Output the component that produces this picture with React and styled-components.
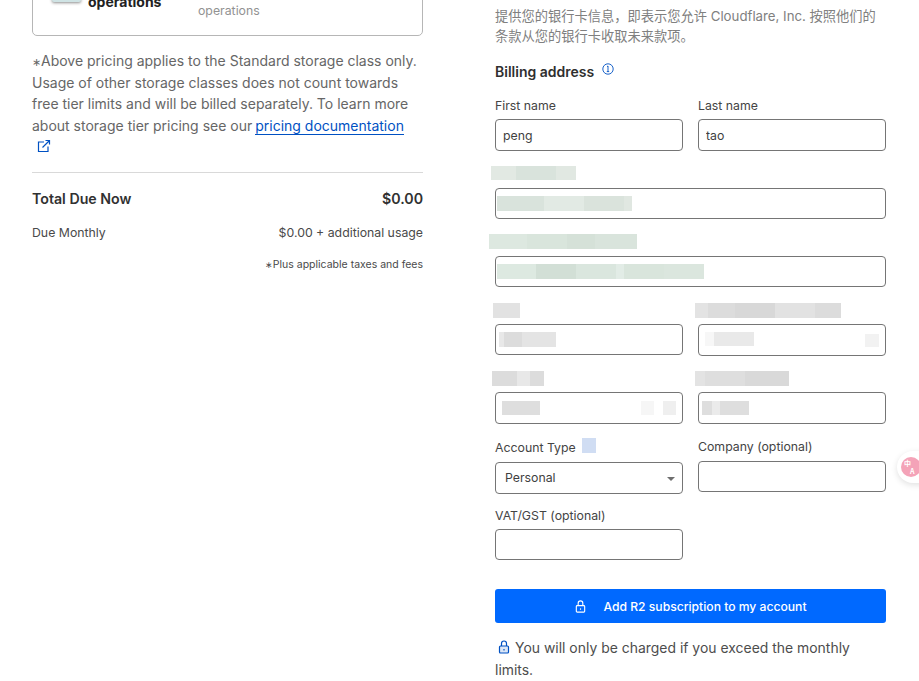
import React from 'react';
import styled, { createGlobalStyle } from 'styled-components';

const GlobalStyle = createGlobalStyle`
  html, body {
    margin: 0;
    padding: 0;
    background: #ffffff;
  }
  body {
    font-family: Inter, "Noto Sans CJK SC", "Liberation Sans", sans-serif;
    color: #313131;
  }
`;

const Page = styled.div`
  position: relative;
  width: 919px;
  height: 681px;
  overflow: hidden;
  display: flex;
  gap: 72px;
  padding-left: 32px;
  box-sizing: border-box;
`;

const Column = styled.div`
  width: 391px;
  flex: none;
`;

const PlanCard = styled.div`
  margin-top: -40px;
  height: 76px;
  box-sizing: border-box;
  border: 1px solid #b6b6b6;
  border-radius: 5px;
  display: flex;
  padding: 0 19px;
`;

const PlanThumb = styled.div`
  width: 29px;
  height: 41px;
  border-radius: 2px;
  background: #cfe3e4;
  box-shadow: 0 1px 3px rgba(0, 0, 0, 0.45);
  flex: none;
`;

const PlanName = styled.div`
  width: 110px;
  margin-left: 7px;
  padding-top: 32px;
  font-size: 14px;
  line-height: 17px;
  font-weight: 700;
  color: #222222;
`;

const PlanDetail = styled.div`
  padding-top: 42px;
  font-size: 12.3px;
  line-height: 16px;
  color: #929292;
`;

const Footnote = styled.p`
  margin: 14px 0 0;
  font-size: 14px;
  line-height: 21.5px;
  color: #666666;
`;

const Star = styled.span`
  font-size: ${(p) => p.$size}px;
  line-height: 1;
`;

const DocLink = styled.a`
  margin-left: -1px;
  color: #0051c3;
  border-bottom: 1px solid #0051c3;
  text-decoration: none;
`;

const LinkIcon = styled.svg`
  width: 14px;
  height: 14px;
  margin-left: 5px;
  vertical-align: -1px;
`;

const Divider = styled.hr`
  margin: 14px 0 0;
  border: 0;
  border-top: 1px solid #d9d9d9;
`;

const SummaryRow = styled.div`
  display: flex;
  justify-content: space-between;
  align-items: center;
  margin-top: ${(p) => p.$top}px;
  font-size: ${(p) => p.$size}px;
  line-height: 18px;
  font-weight: ${(p) => p.$weight || 400};
  color: ${(p) => p.$color || '#4a4a4a'};
`;

const TaxNote = styled.div`
  margin-top: 16px;
  text-align: right;
  font-size: 10.5px;
  line-height: 14px;
  color: #4a4a4a;
`;

const Consent = styled.p`
  margin: 7px 0 0;
  font-size: 13.25px;
  line-height: 19.5px;
  color: #808080;
`;

const Heading = styled.div`
  display: flex;
  align-items: flex-start;
  gap: 8px;
  margin-top: 16px;
  font-size: 14px;
  line-height: 20px;
  font-weight: 600;
  color: #2f2f2f;
`;

const InfoIcon = styled.svg`
  width: 12px;
  height: 12px;
  margin-top: 1px;
`;

const Row = styled.div`
  display: grid;
  grid-template-columns: 188px 188px;
  column-gap: 15px;
  align-items: start;
  margin-top: ${(p) => p.$top}px;
`;

const WideRow = styled.div`
  margin-top: ${(p) => p.$top}px;
`;

const Label = styled.label`
  display: block;
  margin-top: ${(p) => p.$top || 0}px;
  margin-bottom: ${(p) => p.$gap ?? 5}px;
  font-size: 12.3px;
  line-height: 16px;
  color: #444444;
`;

const LabelLine = styled.div`
  display: flex;
  align-items: flex-start;
  height: 16px;
  margin-bottom: 7px;
`;

const HelpMark = styled.span`
  width: 14px;
  height: 15px;
  margin: -1px 0 0 6px;
  background: #d0ddf3;
`;

const boxStyle = `
  display: flex;
  align-items: center;
  width: 100%;
  box-sizing: border-box;
  border: 1px solid #757575;
  border-radius: 4px;
  background: #ffffff;
`;

const TextInput = styled.input`
  ${boxStyle}
  height: ${(p) => p.$h || 31}px;
  padding: 0 7px;
  font: 400 12.3px Inter, sans-serif;
  color: #3f3f3f;
  outline: none;
`;

const MaskedBox = styled.div`
  ${boxStyle}
  height: ${(p) => p.$h || 31}px;
  margin-top: ${(p) => p.$top}px;
`;

const Mosaic = styled.div`
  display: flex;
  flex: none;
  height: ${(p) => p.$h || 15}px;
  margin-left: ${(p) => p.$left || 0}px;
  margin-right: ${(p) => p.$right || 0}px;
  margin-top: ${(p) => p.$lift || 0}px;
`;

const Tile = styled.span`
  width: ${(p) => p.$w}px;
  background: ${(p) => p.$c};
`;

const Spacer = styled.span`
  flex: 1;
`;

const SelectWrap = styled.div`
  position: relative;
`;

const Select = styled.select`
  ${boxStyle}
  height: 32px;
  padding: 0 9px 2px;
  appearance: none;
  font: 400 12.3px Inter, sans-serif;
  color: #3f3f3f;
`;

const Caret = styled.span`
  position: absolute;
  right: 8px;
  top: 15px;
  border-left: 4px solid transparent;
  border-right: 4px solid transparent;
  border-top: 4px solid #6e6e6e;
`;

const SubmitButton = styled.button`
  display: flex;
  align-items: center;
  justify-content: center;
  gap: 16px;
  width: 100%;
  height: 34px;
  margin-top: 29px;
  border: 0;
  border-radius: 3px;
  background: #0069ff;
  color: #ffffff;
  font: 500 12.15px Inter, sans-serif;
`;

const LockIcon = styled.svg`
  width: ${(p) => p.$size}px;
  height: ${(p) => p.$size}px;
  flex: none;
`;

const ChargeNote = styled.p`
  margin: 14px 0 0;
  font-size: 13.95px;
  line-height: 22px;
  color: #4d4d4d;

  svg {
    margin: 0 4px 0 2px;
    vertical-align: -1px;
  }
`;

const TranslateBadge = styled.div`
  position: absolute;
  left: 897px;
  top: 451px;
  width: 40px;
  height: 32px;
  border-radius: 16px;
  background: #ffffff;
  box-shadow: 0 2px 6px rgba(0, 0, 0, 0.12);
`;

const TranslateDot = styled.div`
  position: absolute;
  left: 4px;
  top: 6px;
  width: 20px;
  height: 20px;
  border-radius: 50%;
  background: #f4a3b8;
  color: #ffffff;
  font: 700 7px/8px "Noto Sans CJK SC", sans-serif;
  padding: 2px 0 0 3px;
  box-sizing: border-box;
`;

const GlyphLine = styled.span`
  display: block;
  height: 8px;
  overflow: hidden;
  padding-left: ${(p) => p.$indent || 0}px;
`;

const Lock = ({ size, color, fill = 'none' }) => (
  <LockIcon $size={size} viewBox="0 0 14 14" fill="none" stroke={color} strokeWidth="1.2">
    <rect x="2.5" y="6" width="9" height="7" rx="1" fill={fill} />
    <path d="M4.5 6V3.5a2.5 2.5 0 0 1 5 0V6" />
    <path d="M7 9v1.5" />
  </LockIcon>
);

const mask = {
  label1: [[25, '#e2e9e3'], [40, '#d9e3dc'], [20, '#e1e8e2']],
  input1: [[47, '#d9e3dc'], [40, '#e2eae4'], [40, '#dae3dc'], [8, '#e0e7e1']],
  label2: [[38, '#dde8e0'], [40, '#d9e5dc'], [28, '#d5e1d8'], [42, '#d9e4dc']],
  input2: [[39, '#dde9e1'], [40, '#d2dfd6'], [40, '#dae6de'], [8, '#e2ece6'], [40, '#d9e5dc'], [40, '#dbe6de']],
  label3l: [[27, '#e2e2e2']],
  label3r: [[13, '#e3e3e3'], [27, '#dcdcdc'], [40, '#d8d8d8'], [40, '#e2e2e2'], [26, '#dcdcdc']],
  input3l: [[5, '#e8e8e8'], [18, '#dcdcdc'], [34, '#e4e4e4']],
  input3r: [[9, '#f7f7f7'], [40, '#e9e9e9']],
  end3r: [[14, '#f2f2f2']],
  label4l: [[25, '#dcdcdc'], [13, '#e8e8e8'], [14, '#dcdcdc']],
  label4r: [[10, '#e3e3e3'], [40, '#dedede'], [44, '#d9d9d9']],
  input4l: [[38, '#dedede']],
  end4a: [[13, '#f6f6f6']],
  end4b: [[13, '#efefef']],
  input4r: [[10, '#dedede'], [8, '#ebebeb'], [29, '#dedede']],
};

const Tiles = ({ name }) =>
  mask[name].map(([w, c], i) => <Tile key={i} $w={w} $c={c} />);

export default function App() {
  return (
    <Page>
      <GlobalStyle />
      <Column>
        <PlanCard>
          <PlanThumb />
          <PlanName>operations</PlanName>
          <PlanDetail>operations</PlanDetail>
        </PlanCard>
        <Footnote>
          <Star $size={11}>∗</Star>Above pricing applies to the Standard storage class only. Usage of
          other storage classes does not count towards free tier limits and will be billed separately.
          To learn more about storage tier pricing see our{' '}
          <DocLink href="#">pricing documentation</DocLink>{' '}
          <LinkIcon viewBox="0 0 14 14" fill="none" stroke="#0051c3" strokeWidth="1.2">
            <path d="M7 3H1.5v9.5H11V7.5" />
            <path d="M5.5 8.5 12.5 1.5M8.5 1.5h4v4" />
          </LinkIcon>
        </Footnote>
        <Divider />
        <SummaryRow $top={17} $size={14.2} $weight={600} $color="#313131">
          <span>Total Due Now</span>
          <span>$0.00</span>
        </SummaryRow>
        <SummaryRow $top={16} $size={12.3}>
          <span>Due Monthly</span>
          <span>$0.00 + additional usage</span>
        </SummaryRow>
        <TaxNote><Star $size={8.5}>∗</Star>Plus applicable taxes and fees</TaxNote>
      </Column>

      <Column>
        <Consent>
          提供您的银行卡信息，即表示您允许 Cloudflare, Inc. 按照他们的
          <br />
          条款从您的银行卡收取未来款项。
        </Consent>
        <Heading>
          Billing address
          <InfoIcon viewBox="0 0 12 12" fill="none" stroke="#0051c3" strokeWidth="0.9">
            <circle cx="6" cy="6" r="5.2" />
            <path d="M5 3.6 6 3v5.6M4.8 8.6h2.4" />
          </InfoIcon>
        </Heading>

        <Row $top={16}>
          <div>
            <Label>First name</Label>
            <TextInput $h={32} defaultValue="peng" />
          </div>
          <div>
            <Label>Last name</Label>
            <TextInput $h={32} defaultValue="tao" />
          </div>
        </Row>

        <WideRow $top={15}>
          <Mosaic $h={14} $left={-4}><Tiles name="label1" /></Mosaic>
          <MaskedBox $top={8}>
            <Mosaic $left={1}><Tiles name="input1" /></Mosaic>
          </MaskedBox>
        </WideRow>

        <WideRow $top={15}>
          <Mosaic $left={-6}><Tiles name="label2" /></Mosaic>
          <MaskedBox $top={7}>
            <Mosaic $left={1}><Tiles name="input2" /></Mosaic>
          </MaskedBox>
        </WideRow>

        <Row $top={16}>
          <div>
            <Mosaic $left={-2}><Tiles name="label3l" /></Mosaic>
            <MaskedBox $top={6}>
              <Mosaic $left={3}><Tiles name="input3l" /></Mosaic>
            </MaskedBox>
          </div>
          <div>
            <Mosaic $left={-3}><Tiles name="label3r" /></Mosaic>
            <MaskedBox $h={32} $top={6}>
              <Mosaic $left={6} $h={14} $lift={-3}><Tiles name="input3r" /></Mosaic>
              <Spacer />
              <Mosaic $right={6} $h={13}><Tiles name="end3r" /></Mosaic>
            </MaskedBox>
          </div>
        </Row>

        <Row $top={15}>
          <div>
            <Mosaic $left={-3}><Tiles name="label4l" /></Mosaic>
            <MaskedBox $h={32} $top={6}>
              <Mosaic $left={6} $h={14}><Tiles name="input4l" /></Mosaic>
              <Spacer />
              <Mosaic $h={14}><Tiles name="end4a" /></Mosaic>
              <Mosaic $left={9} $right={6} $h={14}><Tiles name="end4b" /></Mosaic>
            </MaskedBox>
          </div>
          <div>
            <Mosaic $left={-3}><Tiles name="label4r" /></Mosaic>
            <MaskedBox $h={32} $top={6}>
              <Mosaic $left={3} $h={14}><Tiles name="input4r" /></Mosaic>
            </MaskedBox>
          </div>
        </Row>

        <Row $top={15}>
          <div>
            <LabelLine>
              <Label $gap={0} $top={1}>Account Type</Label>
              <HelpMark />
            </LabelLine>
            <SelectWrap>
              <Select defaultValue="Personal">
                <option>Personal</option>
              </Select>
              <Caret />
            </SelectWrap>
          </div>
          <div>
            <Label $gap={6}>Company (optional)</Label>
            <TextInput />
          </div>
        </Row>

        <Row $top={14}>
          <div>
            <Label>VAT/GST (optional)</Label>
            <TextInput />
          </div>
        </Row>

        <SubmitButton type="button">
          <Lock size={13} color="#ffffff" />
          Add R2 subscription to my account
        </SubmitButton>

        <ChargeNote>
          <Lock size={14} color="#0051c3" fill="#dbe6f6" />
          You will only be charged if you exceed the monthly limits.
        </ChargeNote>
      </Column>

      <TranslateBadge>
        <TranslateDot>
          <GlyphLine>中</GlyphLine>
          <GlyphLine $indent={6}>A</GlyphLine>
        </TranslateDot>
      </TranslateBadge>
    </Page>
  );
}
